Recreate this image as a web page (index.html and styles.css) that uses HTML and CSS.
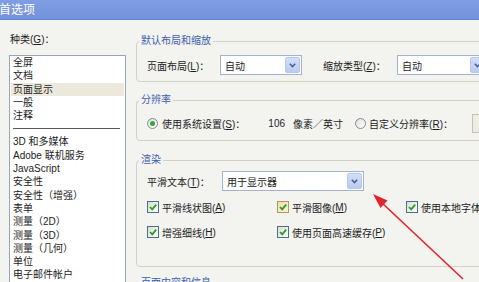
FILE: index.html
```html
<!DOCTYPE html>
<html lang="zh-CN">
<head>
<meta charset="utf-8">
<title>首选项</title>
<link rel="stylesheet" href="styles.css">
</head>
<body>
<div class="title">首选项</div>
<div class="main">
  <div class="cat">
    <div class="cat-label">种类(<u>G</u>)：</div>
    <ul class="list">
      <li>全屏</li>
      <li>文档</li>
      <li class="sel">页面显示</li>
      <li>一般</li>
      <li>注释</li>
      <li class="sep"><span></span></li>
      <li>3D 和多媒体</li>
      <li>Adobe 联机服务</li>
      <li>JavaScript</li>
      <li>安全性</li>
      <li>安全性（增强）</li>
      <li>表单</li>
      <li>测量（2D）</li>
      <li>测量（3D）</li>
      <li>测量（几何）</li>
      <li>单位</li>
      <li>电子邮件帐户</li>
    </ul>
  </div>
  <div class="panel">
    <fieldset class="grp g1">
      <legend>默认布局和缩放</legend>
      <div class="row">
        <span class="lbl w73">页面布局(<u>L</u>)：</span>
        <div class="select w82"><span>自动</span><span class="btn"><svg width="7" height="5" viewBox="0 0 7 5"><path d="M0.8 0.8 L3.5 3.6 L6.2 0.8" fill="none" stroke="#4d6185" stroke-width="1.6"/></svg></span></div>
        <span class="lbl w74 ml21">缩放类型(<u>Z</u>)：</span>
        <div class="select w90"><span>自动</span><span class="btn"><svg width="7" height="5" viewBox="0 0 7 5"><path d="M0.8 0.8 L3.5 3.6 L6.2 0.8" fill="none" stroke="#4d6185" stroke-width="1.6"/></svg></span></div>
      </div>
    </fieldset>
    <fieldset class="grp g2">
      <legend>分辨率</legend>
      <div class="row">
        <span class="radio on"></span>
        <span class="ml4">使用系统设置(<u>S</u>)：</span>
        <span class="ml23">106</span>
        <span class="ml8">像素／英寸</span>
        <span class="radio ml12"></span>
        <span class="ml3">自定义分辨率(<u>R</u>)：</span>
        <span class="dis"></span>
      </div>
    </fieldset>
    <fieldset class="grp g3">
      <legend>渲染</legend>
      <div class="row">
        <span class="lbl w75">平滑文本(<u>T</u>)：</span>
        <div class="select w142"><span>用于显示器</span><span class="btn"><svg width="7" height="5" viewBox="0 0 7 5"><path d="M0.8 0.8 L3.5 3.6 L6.2 0.8" fill="none" stroke="#4d6185" stroke-width="1.6"/></svg></span></div>
      </div>
      <div class="checks">
        <div class="chk"><span class="box"><svg width="10" height="10" viewBox="0 0 10 10"><path d="M2 5 L4.2 7.3 L8.2 2.6" fill="none" stroke="#25a025" stroke-width="1.8"/></svg></span>平滑线状图(<u>A</u>)</div>
        <div class="chk"><span class="box hot"><svg width="10" height="10" viewBox="0 0 10 10"><path d="M2 5 L4.2 7.3 L8.2 2.6" fill="none" stroke="#25a025" stroke-width="1.8"/></svg></span>平滑图像(<u>M</u>)</div>
        <div class="chk"><span class="box"><svg width="10" height="10" viewBox="0 0 10 10"><path d="M2 5 L4.2 7.3 L8.2 2.6" fill="none" stroke="#25a025" stroke-width="1.8"/></svg></span>使用本地字体</div>
        <div class="chk"><span class="box"><svg width="10" height="10" viewBox="0 0 10 10"><path d="M2 5 L4.2 7.3 L8.2 2.6" fill="none" stroke="#25a025" stroke-width="1.8"/></svg></span>增强细线(<u>H</u>)</div>
        <div class="chk"><span class="box"><svg width="10" height="10" viewBox="0 0 10 10"><path d="M2 5 L4.2 7.3 L8.2 2.6" fill="none" stroke="#25a025" stroke-width="1.8"/></svg></span>使用页面高速缓存(<u>P</u>)</div>
      </div>
    </fieldset>
    <fieldset class="grp g4">
      <legend>页面内容和信息</legend>
    </fieldset>
  </div>
</div>
<svg class="arrow" width="479" height="282" viewBox="0 0 479 282">
  <line x1="463" y1="279" x2="381" y2="202" stroke="#e3242b" stroke-width="1.6"/>
  <polygon points="373,194 387.5,200.5 380.5,208" fill="#e3242b"/>
</svg>
</body>
</html>
```
FILE: styles.css
```css
body {
  margin: 0;
  width: 479px;
  height: 282px;
  overflow: hidden;
  position: relative;
  background: #f3f3ef;
  font-family: "Liberation Sans", "Noto Sans CJK SC", sans-serif;
  font-size: 10px;
  color: #1c1c1c;
}

.title {
  height: 19px;
  line-height: 18px;
  border-bottom: 1px solid #6283d0;
  background: linear-gradient(#809ee3, #7292da);
  color: #fff;
  font-size: 12px;
  font-family: "Noto Sans CJK SC", sans-serif;
  text-indent: -1px;
}

.main {
  display: flex;
}

.cat {
  width: 126px;
  padding-left: 9px;
  box-sizing: border-box;
  flex: none;
}

.cat-label {
  margin: 14px 0 0 1px;
  line-height: 12px;
}

.list {
  margin: 9px 0 0;
  padding: 0 1px;
  list-style: none;
  border: 1px solid #9aa6b6;
  background: #fff;
  height: 240px;
}

.list li {
  line-height: 13.3px;
  padding-left: 2px;
  white-space: nowrap;
}

.list li.sel {
  background: #ece9dc;
}

.list li.sep {
  height: 13px;
  display: flex;
  align-items: center;
  padding: 0 4px 0 2px;
}

.list li.sep span {
  flex: 1;
  height: 1px;
  background: #5a5a5a;
}

.panel {
  margin-left: 10px;
  width: 420px;
  flex: none;
}

.grp {
  margin: 0;
  border: 1px solid #d4d1c4;
  border-radius: 4px;
  padding: 0 0 0 2px;
  min-width: 0;
}

.grp legend {
  padding: 0 2px;
  line-height: 12px;
  color: #3d5fb0;
}

.g1 { margin-top: 15px; padding-top: 8px; padding-bottom: 6px; }
.g2 { margin-top: 12px; padding-top: 7px; padding-bottom: 7px; }
.g3 { margin-top: 13px; padding-top: 5px; padding-bottom: 26px; }
.g4 { margin-top: 10px; height: 30px; }

.row {
  display: flex;
  align-items: center;
  height: 20px;
  padding-left: 8px;
  white-space: nowrap;
}

.row > * { flex: none; }

.w73 { width: 73px; }
.w74 { width: 74px; }
.w75 { width: 75px; }
.w82 { width: 82px; }
.w90 { width: 90px; }
.w142 { width: 142px; }
.ml3 { margin-left: 3px; }
.ml4 { margin-left: 4px; }
.ml8 { margin-left: 8px; }
.ml12 { margin-left: 12px; }
.ml21 { margin-left: 21px; }
.ml23 { margin-left: 23px; }

.select {
  box-sizing: border-box;
  height: 20px;
  border: 1px solid #a3b3c9;
  background: #fff;
  display: flex;
  align-items: center;
  justify-content: space-between;
  padding: 1px 1px 1px 4px;
}

.select .btn {
  width: 15px;
  height: 16px;
  box-sizing: border-box;
  border: 1px solid #b7c8ee;
  border-radius: 2px;
  background: linear-gradient(#d3dffa, #b9cbf3);
  display: flex;
  align-items: center;
  justify-content: center;
}

.radio {
  width: 11px;
  height: 11px;
  box-sizing: border-box;
  border-radius: 50%;
  border: 1px solid #7d8e9e;
  background: linear-gradient(135deg, #e0e0d8, #fff);
  display: flex;
  align-items: center;
  justify-content: center;
}

.radio.on::after {
  content: "";
  width: 5px;
  height: 5px;
  border-radius: 50%;
  background: #3aa33a;
}

.dis {
  margin-left: 19px;
  width: 30px;
  height: 19px;
  box-sizing: border-box;
  border: 1px solid #c6c3b4;
  background: #eeede4;
}

.checks {
  display: grid;
  grid-template-columns: 130px 129px auto;
  row-gap: 9px;
  margin-top: 8px;
  padding-left: 8px;
}

.chk {
  display: flex;
  align-items: center;
  height: 16px;
  white-space: nowrap;
}

.box {
  width: 12px;
  height: 12px;
  box-sizing: border-box;
  margin-right: 3px;
  border: 1px solid #45738d;
  background: linear-gradient(135deg, #dcdcd2, #fff);
  display: flex;
  align-items: center;
  justify-content: center;
  flex: none;
}

.box.hot {
  border-color: #b4975a;
  background: linear-gradient(135deg, #f0dcae, #fbf3dc);
}

.arrow {
  position: absolute;
  left: 0;
  top: 0;
  pointer-events: none;
}
```
